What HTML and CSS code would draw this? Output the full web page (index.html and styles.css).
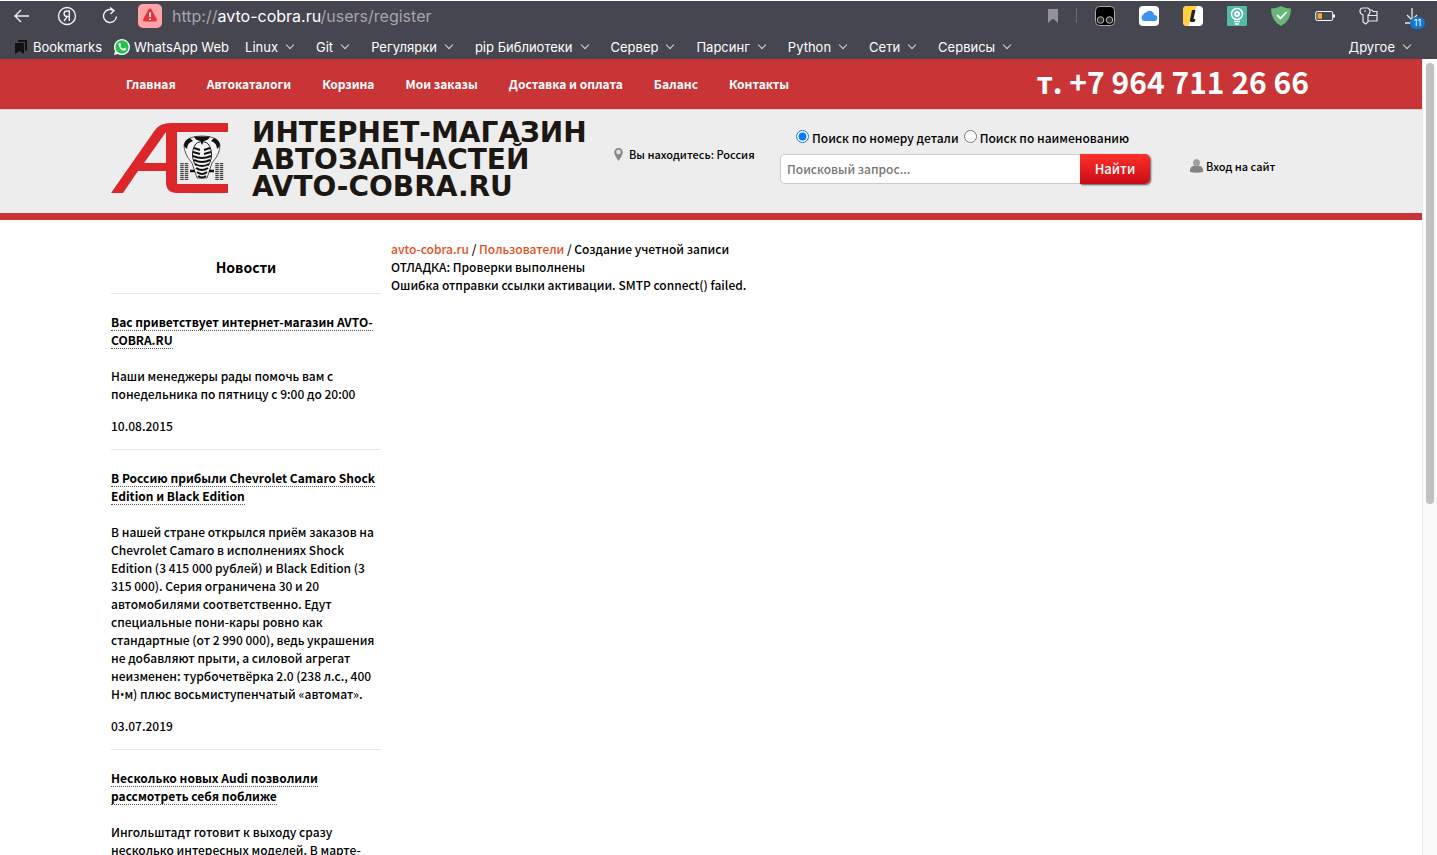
FILE: index.html
```html
<!DOCTYPE html>
<html lang="ru">
<head>
<meta charset="utf-8">
<title>Создание учетной записи</title>
<link rel="stylesheet" href="styles.css">
</head>
<body>
<div class="browser">
  <div class="toolbar">
    <button class="tool" aria-label="Назад"><svg width="18" height="18" viewBox="0 0 18 18"><path d="M16 9H2M8 3L2 9l6 6"/></svg></button>
    <button class="tool" aria-label="Яндекс"><svg width="20" height="20" viewBox="0 0 20 20"><circle cx="10" cy="10" r="8.5"/><path d="M12.3 15V5h-2.1c-4.2 0-4.2 5.4 0 5.4h2.1M10.4 10.4L7 15"/></svg></button>
    <button class="tool" aria-label="Обновить"><svg width="18" height="18" viewBox="0 0 18 18"><path d="M12.500 3.500A6.500 6.500 0 1 0 15.500 9.500M9 .5l4 3-3.500 3.500"/></svg></button>
    <button class="warning" aria-label="Не защищено"><svg width="24" height="24" viewBox="0 0 24 24"><path d="M12 4.500Q13 4.500 13.700 5.700L18.700 15Q19.600 17.500 17 17.500H7Q4.400 17.500 5.300 15L10.300 5.700Q11 4.500 12 4.500z" fill="#e0333c"/><path d="M12 8.500v4.500M12 14.500v1.500" stroke="#fff" stroke-width="1.800"/></svg></button>
    <div class="address">http://<span class="host">avto-cobra.ru</span>/users/register</div>
    <div class="extensions">
      <svg class="flag" width="10" height="14" viewBox="0 0 10 14"><path d="M0 0h10v14L5 9.500 0 14z" fill="#929297"/></svg>
      <span class="divider"></span>
      <svg width="20" height="20" viewBox="0 0 20 20"><rect x=".5" y=".5" width="19" height="19" rx="4" fill="#000" stroke="#aaa"/><g fill="#333" stroke="#bbb"><circle cx="5.500" cy="14" r="3.300"/><circle cx="14.500" cy="14" r="3.300"/></g></svg>
      <svg width="20" height="20" viewBox="0 0 20 20"><rect width="20" height="20" rx="4" fill="#fff"/><path d="M5 15a3.500 3.500 0 0 1-.5-6.500A3 3 0 0 1 7 6.500a4.500 4.500 0 0 1 8 2.500 3 3 0 0 1 .5 6z" fill="#3b94f2"/></svg>
      <svg width="20" height="20" viewBox="0 0 20 20"><rect width="20" height="20" rx="4" fill="#fff"/><path d="M4 0h10L5 20H4a4 4 0 0 1-4-4V4a4 4 0 0 1 4-4z" fill="#ffd040"/><path d="M9 4h3.500l-2 9h2l-1 3H9q-2.500 0-2-2z" fill="#222"/></svg>
      <svg width="20" height="20" viewBox="0 0 20 20"><rect width="20" height="20" rx="1" fill="#50bca6"/><circle cx="10" cy="8" r="5.500" fill="none" stroke="#fff" stroke-width="1.500"/><circle cx="10" cy="8" r="2" fill="none" stroke="#fff" stroke-width="2"/><path d="M7 15.500h6M8 18h4" stroke="#fff" stroke-width="1.500"/></svg>
      <svg width="20" height="20" viewBox="0 0 20 20"><path d="M10 0q5 2.500 10 2.500Q20 15 10 20 0 15 0 2.500 5 2.500 10 0z" fill="#67b779"/><path d="M6 9l3.500 3.500 6-6.500" fill="none" stroke="#fff" stroke-width="1.800"/></svg>
      <svg width="20" height="20" viewBox="0 0 20 20"><rect x=".7" y="5.500" width="17" height="9" rx="1.500" fill="none" stroke="#fff"/><rect x="2.500" y="7.200" width="4.500" height="5.600" fill="#f7a62b"/><path d="M19 8.500v3" stroke="#fff" stroke-width="2"/></svg>
      <svg width="20" height="20" viewBox="0 0 20 20"><g fill="none" stroke="#e8e8ea" stroke-width="1.200"><path d="M9 2H4Q1 2 1 5t3 4v7l2.500 2L9 16V9q2-1 2-3.500T9 2zM5 5h2M11 4h2l1 1.500h4v4h-7M9 12V9.500h9V15H9"/></g></svg>
      <div class="downloads"><svg width="20" height="20" viewBox="0 0 20 20"><path d="M9 2v12M4 9l5 5 5-5M2 17h8" fill="none" stroke="#e8e8ea" stroke-width="1.300"/></svg><span class="badge">11</span></div>
    </div>
  </div>
  <nav class="bookmarks">
    <a class="mark" href="#"><svg width="12" height="14" viewBox="0 0 12 14"><path d="M3 0h9v11l-2-1V2H3zM0 3h9v11l-4.500-3L0 14z" fill="#111"/></svg>Bookmarks</a>
    <a class="mark whatsapp" href="#"><svg width="16" height="16" viewBox="0 0 16 16"><path d="M0 16l1-4A8 8 0 1 1 4 15z" fill="#fff"/><circle cx="8" cy="8" r="6.700" fill="#27c24c"/><path d="M4.500 5q1-2 2-.5l.5 1.500-.7 1q1 2 3 2.700l1-1 2 1q0 2-2.300 2Q5.500 11 4.500 5z" fill="#fff"/></svg>WhatsApp Web</a>
    <button class="folder">Linux</button><button class="folder">Git</button><button class="folder">Регулярки</button><button class="folder">pip Библиотеки</button><button class="folder">Сервер</button><button class="folder">Парсинг</button><button class="folder">Python</button><button class="folder">Сети</button><button class="folder">Сервисы</button><button class="folder other">Другое</button>
  </nav>
</div>
<div class="viewport">
  <div class="page">
    <div class="topbar"><div class="container topbar-inner">
      <nav class="menu"><a href="#">Главная</a><a href="#">Автокаталоги</a><a href="#">Корзина</a><a href="#">Мои заказы</a><a href="#">Доставка и оплата</a><a href="#">Баланс</a><a href="#">Контакты</a></nav>
      <div class="phone">т. +7 964 711 26 66</div>
    </div></div>
    <header class="header"><div class="container header-inner">
      <a class="logo" href="#">
        <svg width="118" height="71" viewBox="0 0 118 71"><path d="M0 70L44 7Q49 0 60 0H117V9H66V61H117V70H66Q55 70 55 59V48H27L12 70zM33 40H55V9z" fill="#db2729" fill-rule="evenodd"/>
        <path d="M73 22Q75 13 91 13T109 22Q109 31 101 40L96 55H86L81 40Q73 31 73 22z" fill="#f4f4f4" stroke="#333" stroke-width=".8"/>
        <path d="M73 23Q73 17 79 15L82 18Q76 20 76 26zM109 23Q109 17 103 15L100 18Q106 20 106 26zM83 13.500H99Q98 17 93 18L91 22 89 18Q84 17 83 13.500z" fill="#111"/>
        <path d="M89 19Q84 19 82 27T85 43M93 19Q98 19 100 27T97 43" fill="none" stroke="#222"/>
        <path d="M83 25l6 2M99 25l-6 2M82 29l7 2M100 29l-7 2M82 33q9 4 18 0M83 37q8 4 16 0M84 41q7 4 14 0M85 45q6 4 12 0M86 49q5 4 10 0M87 53q4 3 8 0" fill="none" stroke="#111" stroke-width="2"/>
        <path d="M79 48h5M98 48h5" stroke="#111" stroke-width="2.500"/>
        <path d="M71 40v17M75.500 40v17M106 40v17M110.500 40v17" stroke="#444" stroke-width="3.500" stroke-dasharray="1.300 .7"/></svg>
        <span class="logo-text">ИНТЕРНЕТ-МАГАЗИН<br>АВТОЗАПЧАСТЕЙ<br>AVTO-COBRA.RU</span>
      </a>
      <div class="location"><svg width="9" height="13" viewBox="0 0 9 13"><path d="M4.500 0A4.300 4.300 0 0 1 8.800 4.300Q8.800 7 4.500 13 .2 7 .2 4.300A4.300 4.300 0 0 1 4.500 0z" fill="#888"/><circle cx="4.500" cy="4" r="2.300" fill="#e5e5e5"/></svg>Вы находитесь: Россия</div>
      <form class="search">
        <div class="modes"><input type="radio" name="mode" id="by-number" checked><label for="by-number">Поиск по номеру детали</label><input type="radio" name="mode" id="by-name"><label for="by-name">Поиск по наименованию</label></div>
        <div class="query"><input type="text" aria-label="Поисковый запрос" placeholder="Поисковый запрос..."><button type="button">Найти</button></div>
      </form>
      <a class="login" href="#"><svg width="13" height="14" viewBox="0 0 13 14"><path d="M0 13q-.5-6 4-6h5q4.500 0 4 6-6.500 1.500-13 0z" fill="#838383"/><circle cx="6.500" cy="3.700" r="3.500" fill="#a0a0a0"/></svg>Вход на сайт</a>
    </div></header>
    <div class="container content">
      <aside class="news">
        <h2>Новости</h2>
        <article><h3><a href="#">Вас приветствует интернет-магазин AVTO-<wbr>COBRA.RU</a></h3><p>Наши менеджеры рады помочь вам с понедельника по пятницу с 9:00 до 20:00</p><time>10.08.2015</time></article>
        <article><h3><a href="#">В Россию прибыли Chevrolet Camaro Shock Edition и Black Edition</a></h3><p>В нашей стране открылся приём заказов на Chevrolet Camaro в исполнениях Shock Edition (3 415 000 рублей) и Black Edition (3 315 000). Серия ограничена 30 и 20 автомобилями соответственно. Едут специальные пони-кары ровно как стандартные (от 2 990 000), ведь украшения не добавляют прыти, а силовой агрегат неизменен: турбочетвёрка 2.0 (238 л.с., 400 Н<span class="dot">•</span>м) плюс восьмиступенчатый «автомат».</p><time>03.07.2019</time></article>
        <article><h3><a href="#">Несколько новых Audi позволили рассмотреть себя поближе</a></h3><p>Ингольштадт готовит к выходу сразу несколько интересных моделей. В марте-</p></article>
      </aside>
      <main class="main">
        <div><a href="#">avto-cobra.ru</a> / <a href="#">Пользователи</a> / Создание учетной записи</div>
        <div>ОТЛАДКА: Проверки выполнены</div>
        <div>Ошибка отправки ссылки активации. SMTP connect() failed.</div>
      </main>
    </div>
  </div>
  <div class="scrollbar"><div class="thumb"></div></div>
</div>
</body>
</html>
```
FILE: styles.css
```css
* { box-sizing: border-box; }
body { margin: 0; height: 100vh; display: flex; flex-direction: column; overflow: hidden; background: #fff; color: #000; font: 500 12px/18px "Noto Sans CJK SC", "Noto Sans", sans-serif; }
a { color: inherit; text-decoration: none; }
button { border: 0; padding: 0; background: none; color: inherit; font: inherit; }
svg { flex: none; display: block; }
.browser { flex: none; height: 59px; border-top: 1px solid #fff; background: #45464f; color: #fff; font-family: Inter, sans-serif; font-size: 13px; font-weight: 400; }
.toolbar { display: flex; align-items: center; height: 29px; padding: 0 14px 0 13px; }
.tool { width: 44px; height: 24px; }
.tool svg { fill: none; stroke: #f0f0f2; stroke-width: 1.4; }
.warning { width: 24px; height: 24px; margin-left: -7px; border-radius: 5px; background: #ffa3a8; }
.address { flex: 1; margin-left: 10px; font-size: 16px; color: #a5a5aa; }
.host { color: #fff; }
.extensions { display: flex; align-items: center; gap: 24px; }
.flag { margin-right: -6px; }
.divider { width: 1px; height: 15px; margin-right: -6px; background: #6c6d75; }
.downloads { position: relative; }
.badge { position: absolute; left: 7px; top: 11px; width: 15px; height: 12px; border-radius: 6px; background: #1677d2; font-size: 9px; line-height: 12px; text-align: center; }
.bookmarks { display: flex; align-items: center; height: 29px; margin-top: 2px; padding: 0 27px 0 15px; }
.mark { display: flex; align-items: center; gap: 6px; margin-right: 12px; }
.whatsapp { gap: 4px; margin-right: 16px; }
.folder { display: flex; align-items: center; gap: 9px; margin-right: 23px; }
.folder::after { content: ""; width: 5px; height: 5px; margin-top: -3px; border: solid #d5d5d8; border-width: 0 1px 1px 0; transform: rotate(45deg); }
.other { margin-left: auto; margin-right: 0; }
.viewport { flex: 1; min-height: 0; display: flex; }
.page { flex: 1; min-width: 0; overflow: hidden; }
.scrollbar { flex: none; width: 15px; padding: 4px 3px; background: #fafafa; border-left: 1px solid #e8e8e8; }
.thumb { height: 56%; border-radius: 5px; background: #c1c1c1; }
.container { width: 100%; max-width: 1200px; margin: 0 auto; }
.topbar { background: #c93437; color: #fff; }
.topbar-inner { display: flex; align-items: center; justify-content: space-between; height: 50px; padding: 0 2px 0 15px; }
.menu { display: flex; gap: 31px; font-weight: 700; }
.phone { padding-bottom: 6px; font-size: 30px; line-height: 44px; font-weight: 700; }
.header { background: #ededed; border-top: 1px solid #d4d4d4; border-bottom: 7px solid #c93437; }
.header-inner { display: flex; height: 103px; }
.logo { flex: none; display: flex; gap: 23px; width: 503px; padding-top: 13px; }
.logo-text { color: #1d1714; font: 700 28px/27px "DejaVu Sans", sans-serif; white-space: nowrap; margin-top: -4px; }
.location { display: flex; align-items: center; gap: 6px; height: 18px; margin-top: 35px; width: 166px; font-size: 11px; white-space: nowrap; }
.search { width: 370px; margin-top: 18px; }
.modes { display: flex; align-items: center; height: 20px; padding-left: 16px; white-space: nowrap; }
.modes input { width: 13px; height: 13px; margin: 0 3px 3px 0; accent-color: #0a78ff; }
.modes label { margin-right: 5px; }
.query { display: flex; height: 30px; margin-top: 6px; }
.query input { flex: 1; min-width: 0; border: 1px solid #ccc; border-right: 0; border-radius: 5px 0 0 5px; padding: 0 6px; background: #fff; font: inherit; }
.query input::placeholder { color: #777; }
.query button { width: 70px; border-radius: 0 5px 5px 0; background: linear-gradient(#ff3029, #c90c17); box-shadow: 1px 1px 2px #555; color: #fff; font-size: 13px; }
.login { display: flex; align-items: center; gap: 3px; height: 18px; margin: 47px 0 0 40px; font-size: 11px; }
.content { display: flex; gap: 10px; padding-top: 20px; }
.news { flex: none; width: 270px; }
.news h2 { margin: 0; padding: 17px 0 16px; font-size: 14px; line-height: 20px; text-align: center; }
.news article { border-top: 1px solid #e6e6e6; padding: 19px 0 14px; }
.news h3 { margin: 0 0 18px; font-size: 12px; line-height: 18px; }
.news h3 a { border-bottom: 1px dotted #555; }
.news p { margin: 0 0 14px; }
.news time { display: block; }
.dot { font-family: "Open Sans", sans-serif; line-height: 12px; }
.main { flex: 1; min-width: 0; }
.main a { color: #e4501e; }
```
